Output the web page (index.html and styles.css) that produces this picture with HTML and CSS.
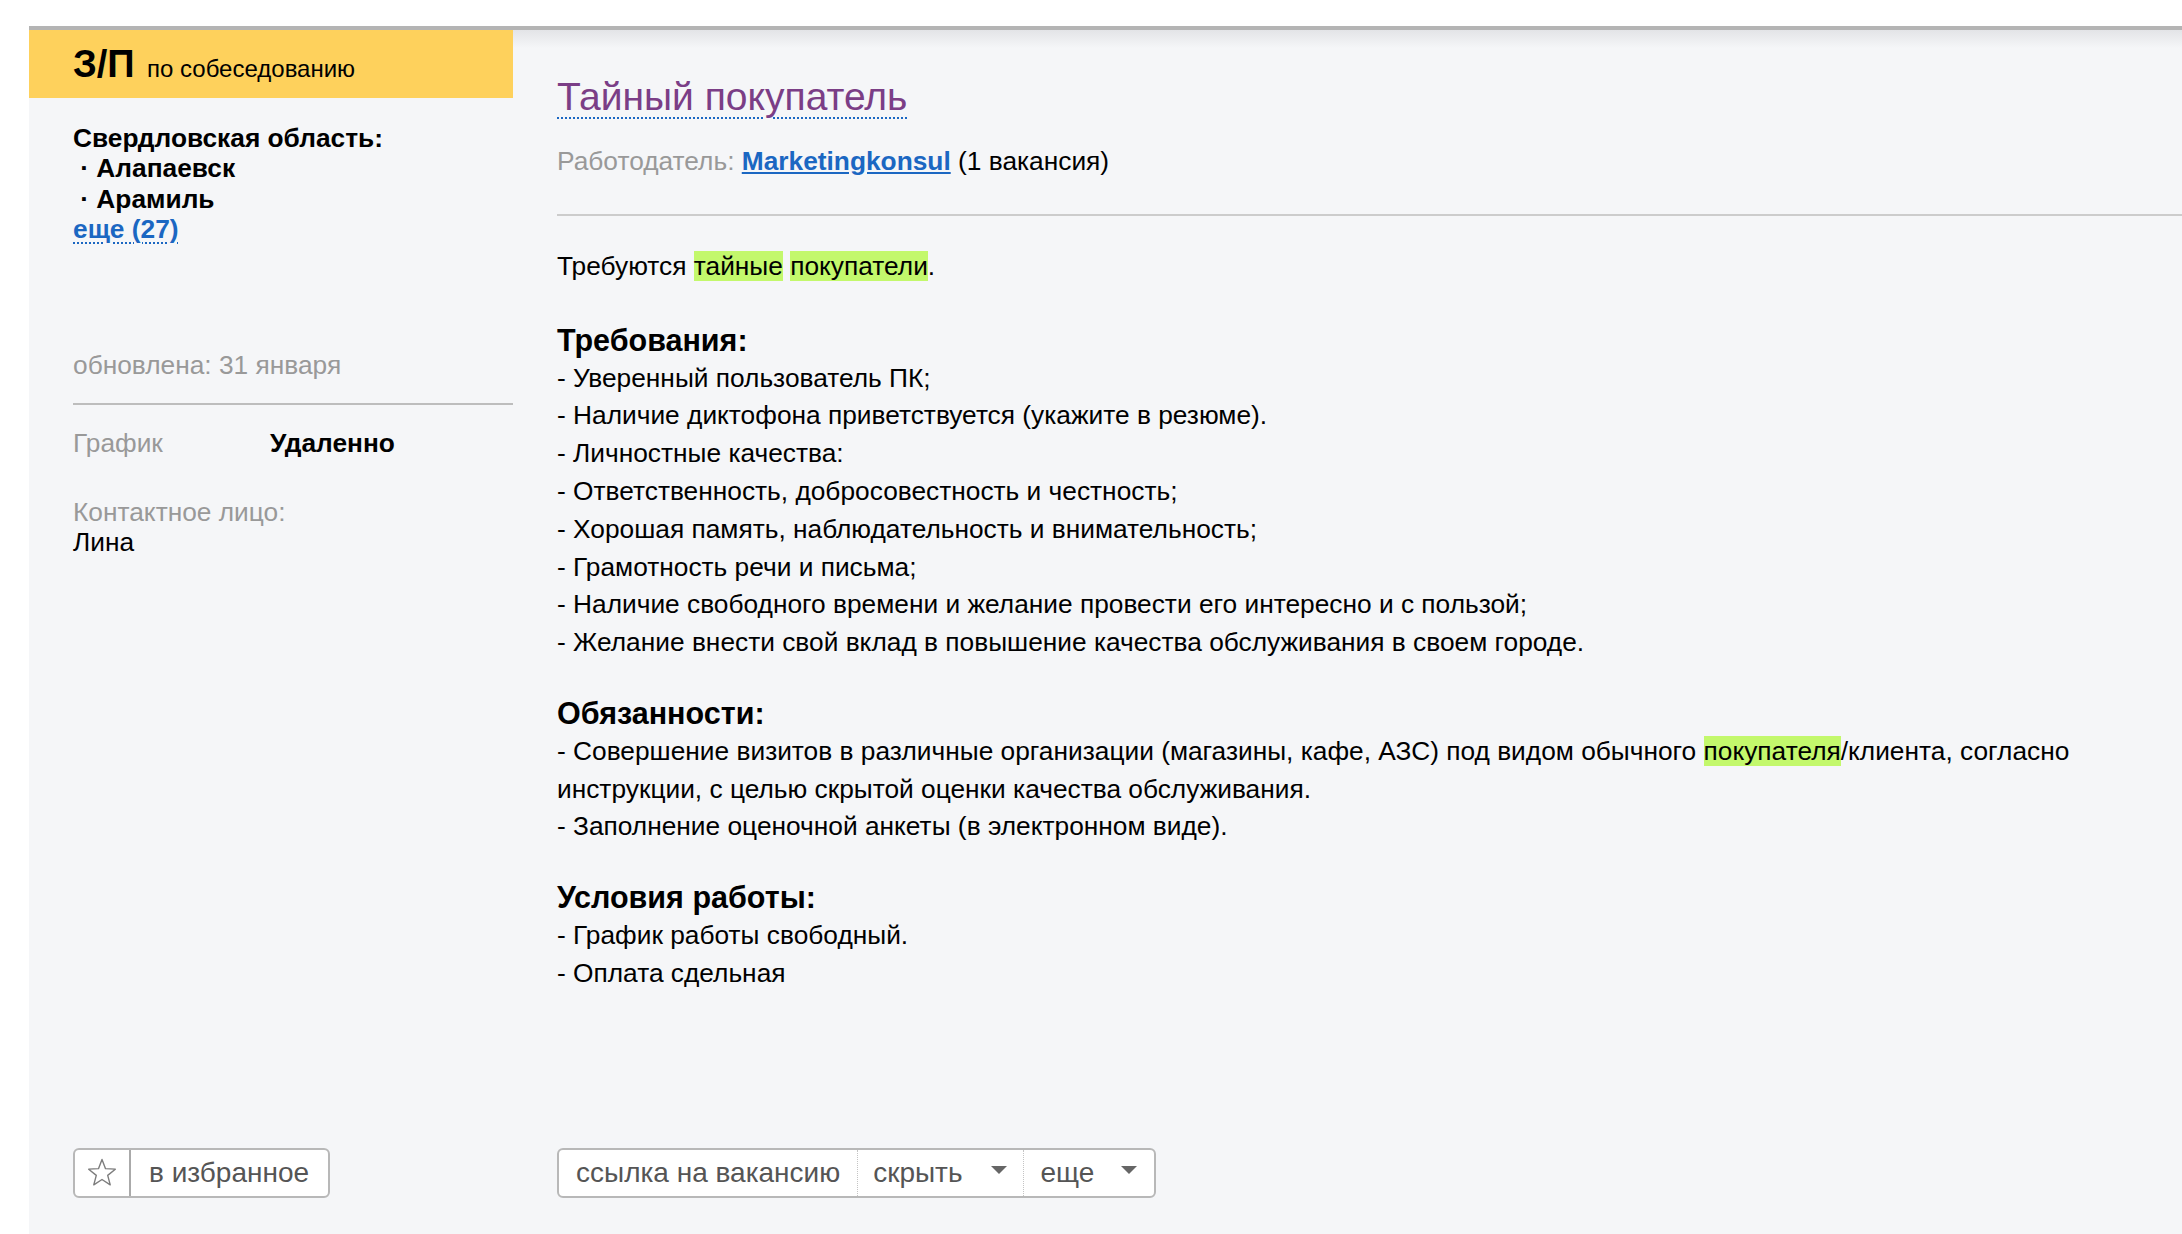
FILE: index.html
```html
<!DOCTYPE html>
<html lang="ru">
<head>
    <meta charset="UTF-8">
    <title>Тайный покупатель</title>
    <link rel="stylesheet" href="styles.css">
</head>
<body>
    <div class="vacancy">
        <div class="sidebar">
            <div class="salary"><b>З/П</b> <span>по собеседованию</span></div>

            <div class="region">
                <div>Свердловская область:</div>
                <div>&nbsp;· Алапаевск</div>
                <div>&nbsp;· Арамиль</div>
                <a href="#" class="more-link">еще (27)</a>
            </div>

            <div class="updated">обновлена: 31 января</div>

            <div class="info-row">
                <span class="info-label">График</span>
                <span class="info-value">Удаленно</span>
            </div>

            <div class="contact">
                <div class="info-label">Контактное лицо:</div>
                <div>Лина</div>
            </div>

            <div class="actions">
                <div class="btn-group">
                    <span class="btn btn-icon">
                        <svg width="30" height="30" viewBox="0 0 30 30">
                            <polygon points="15,1.5 18.53,10.65 28.31,11.17 20.71,17.35 23.23,26.83 15,21.5 6.77,26.83 9.29,17.35 1.69,11.17 11.47,10.65" fill="none" stroke="#7d7d7d" stroke-width="1.4" stroke-linejoin="round"/>
                        </svg>
                    </span>
                    <span class="btn btn-fav">в избранное</span>
                </div>
            </div>
        </div>

        <div class="content">
            <h1 class="title"><a href="#">Тайный покупатель</a></h1>
            <div class="employer">
                <span class="employer-label">Работодатель:</span>
                <a href="#" class="employer-link">Marketingkonsul</a> (1 вакансия)
            </div>

            <div class="desc">
                <p>Требуются <mark>тайные</mark> <mark>покупатели</mark>.</p>

                <h3 class="first">Требования:</h3>
                <p>- Уверенный пользователь ПК;<br>
                - Наличие диктофона приветствуется (укажите в резюме).<br>
                - Личностные качества:<br>
                - Ответственность, добросовестность и честность;<br>
                - Хорошая память, наблюдательность и внимательность;<br>
                - Грамотность речи и письма;<br>
                - Наличие свободного времени и желание провести его интересно и с пользой;<br>
                - Желание внести свой вклад в повышение качества обслуживания в своем городе.</p>

                <h3>Обязанности:</h3>
                <p>- Совершение визитов в различные организации (магазины, кафе, АЗС) под видом обычного <mark>покупателя</mark>/клиента, согласно инструкции, с целью скрытой оценки качества обслуживания.<br>
                - Заполнение оценочной анкеты (в электронном виде).</p>

                <h3>Условия работы:</h3>
                <p>- График работы свободный.<br>
                - Оплата сдельная</p>
            </div>

            <div class="actions">
                <div class="btn-group">
                    <span class="btn">ссылка на вакансию</span>
                    <span class="btn btn-drop">скрыть <i class="arrow"></i></span>
                    <span class="btn btn-drop btn-more">еще <i class="arrow"></i></span>
                </div>
            </div>
        </div>
    </div>
</body>
</html>
```

FILE: styles.css
```css
body {
    margin: 0;
    background-color: #fff;
    font-family: "Liberation Sans", Arial, sans-serif;
    color: #000;
}

a {
    color: #1b67c2;
}

.vacancy {
    display: flex;
    margin: 26px 0 0 29px;
    min-height: 1204px;
    border-top: 4px solid #b4b4b4;
    background: linear-gradient(#e3e4e7, #f5f6f8 18px) no-repeat, #f5f6f8;
}

/* left column */
.sidebar {
    width: 484px;
    flex: none;
    display: flex;
    flex-direction: column;
    font-size: 26.3px;
    line-height: 30.3px;
}

.salary {
    height: 68px;
    line-height: 68px;
    padding-left: 44px;
    background-color: #fed15c;
    white-space: nowrap;
}

.salary b {
    font-size: 38px;
}

.salary span {
    font-size: 24px;
    margin-left: 5px;
}

.region {
    margin: 25px 0 0 44px;
    font-weight: bold;
}

.more-link {
    text-decoration: underline dotted;
    text-decoration-thickness: 2px;
    text-underline-offset: 5px;
}

.updated {
    margin: 106px 0 0 44px;
    padding-bottom: 23px;
    border-bottom: 2px solid #bdbdbd;
    color: #999;
}

.info-row {
    display: flex;
    margin: 23px 0 0 44px;
}

.info-label {
    color: #999;
}

.info-row .info-label {
    width: 197px;
}

.info-value {
    font-weight: bold;
}

.contact {
    margin: 38px 0 0 44px;
}

.sidebar .actions {
    padding-left: 44px;
}

/* right column */
.content {
    flex: 1;
    display: flex;
    flex-direction: column;
    padding: 44px 40px 0 44px;
}

.title {
    margin: 0;
    font-size: 39px;
    font-weight: normal;
    line-height: 46px;
}

.title a {
    color: #7b3e86;
    text-decoration: underline dotted #1b67c2;
    text-decoration-thickness: 2px;
    text-underline-offset: 7px;
}

.employer {
    margin-top: 26px;
    padding-bottom: 38px;
    margin-right: -40px;
    border-bottom: 2px solid #cccccc;
    font-size: 26.3px;
    line-height: 30px;
}

.employer-label {
    color: #999;
}

.employer-link {
    font-weight: bold;
}

.desc {
    margin-top: 32px;
    font-size: 26.3px;
    line-height: 37.8px;
}

.desc p {
    margin: 0;
}

.desc h3 {
    margin: 33px 0 0;
    font-size: 30.5px;
    line-height: 37.8px;
}

.desc h3.first {
    margin-top: 36px;
}

mark {
    background-color: #c3f86c;
    color: #000;
}

/* buttons */
.actions {
    margin-top: auto;
    padding-bottom: 36px;
}

.btn-group {
    display: inline-flex;
    height: 46px;
    border: 2px solid #b8b8b8;
    border-radius: 6px;
    background-color: #fff;
    font-size: 28px;
    color: #555;
}

.btn {
    display: flex;
    align-items: center;
    padding: 0 17px;
    border-left: 1px dotted #c4c4c4;
}

.btn:first-child {
    border-left: none;
}

.btn-icon {
    width: 54px;
    padding: 0;
    justify-content: center;
}

.btn-fav {
    border-left: 2px solid #aaa;
    padding: 0 19px 0 18px;
}

.btn-drop {
    padding: 0 16px 0 15px;
    gap: 28px;
}

.btn-more {
    padding: 0 17px 0 17px;
    gap: 27px;
}

.arrow {
    width: 0;
    height: 0;
    border-left: 8px solid transparent;
    border-right: 8px solid transparent;
    border-top: 8px solid #666;
    margin-top: -6px;
}
```
